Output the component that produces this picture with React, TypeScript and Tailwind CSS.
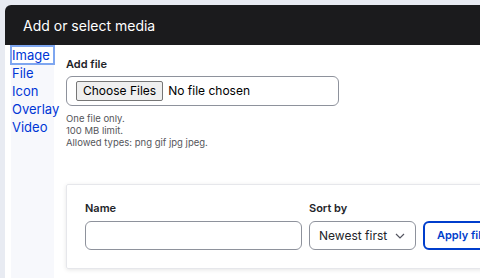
import React from 'react';

const font = { fontFamily: 'Inter, "Noto Sans", sans-serif' };

function Sidebar() {
    const items = ['Image', 'File', 'Icon', 'Overlay', 'Video'];
    return (
        <div className="w-[43px] shrink-0 bg-[#f7f8fc] pt-[1px]">
            {items.map((item, i) => (
                <div
                    key={item}
                    className={`h-[18px] text-[13px] leading-[18px] text-[#0036d6] whitespace-nowrap ${
                        i === 0 ? 'bg-white outline-2 outline-[#7ea6f0] -outline-offset-1' : ''
                    }`}
                >
                    <span className="pl-[1px]">{item}</span>
                </div>
            ))}
        </div>
    );
}

export default function App() {
    return (
        <div className="w-[480px] h-[278px] overflow-hidden bg-[#e8ebf2] pl-[5px] pt-[5px]" style={font}>
            <div className="w-[500px] h-[300px] bg-white rounded-tl-[6px] overflow-hidden flex flex-col">
                {/* Title */}
                <div className="h-[40px] shrink-0 bg-[#1b1b1d] text-white text-[14px] pl-[18px] flex items-center">
                    Add or select media
                </div>

                <div className="flex flex-1 pl-[6px]">
                    <Sidebar />

                    {/* Main */}
                    <div className="flex-1 pl-[12px] pt-[12px]">
                        <div className="text-[11px] font-semibold text-[#232429] leading-[14px]">Add file</div>
                        <div className="mt-[5px] w-[273px] h-[30px] border border-[#8e929c] rounded-[6px] flex items-center pl-[9px]">
                            <span className="h-[20px] px-[6px] bg-[#efefef] border border-[#767676] rounded-[2px] text-[12px] leading-[18px] text-black">
                                Choose Files
                            </span>
                            <span className="ml-[5px] text-[12px] text-black">No file chosen</span>
                        </div>
                        <div className="mt-[7px] text-[9.5px] leading-[12px] text-[#55565b]">
                            <div>One file only.</div>
                            <div>100 MB limit.</div>
                            <div>Allowed types: png gif jpg jpeg.</div>
                        </div>

                        {/* Filters */}
                        <div className="mt-[35px] w-[440px] border border-[#e6e7eb] rounded-[2px] shadow-[0_1px_4px_rgba(0,0,0,0.1)] px-[18px] pt-[16px] pb-[18px]">
                            <div className="flex gap-[7px] items-end">
                                <div className="flex flex-col">
                                    <span className="text-[11px] font-semibold text-[#232429] leading-[14px] mb-[6px]">Name</span>
                                    <div className="w-[217px] h-[29px] border border-[#8e929c] rounded-[6px]" />
                                </div>
                                <div className="flex flex-col">
                                    <span className="text-[11px] font-semibold text-[#232429] leading-[14px] mb-[6px]">Sort by</span>
                                    <div className="w-[107px] h-[29px] border border-[#8e929c] rounded-[6px] flex items-center pl-[9px] gap-[8px] text-[12px] text-[#232429]">
                                        Newest first
                                        <svg width="10" height="6" viewBox="0 0 10 6" fill="none">
                                            <path d="M1 1l4 4 4-4" stroke="#545560" strokeWidth="1.2" />
                                        </svg>
                                    </div>
                                </div>
                                <div className="h-[29px] w-[80px] border-2 border-[#003ecc] rounded-[6px] flex items-center pl-[12px] text-[11px] font-semibold text-[#003ecc] whitespace-nowrap">
                                    Apply filters
                                </div>
                            </div>
                        </div>
                    </div>
                </div>
            </div>
        </div>
    );
}
